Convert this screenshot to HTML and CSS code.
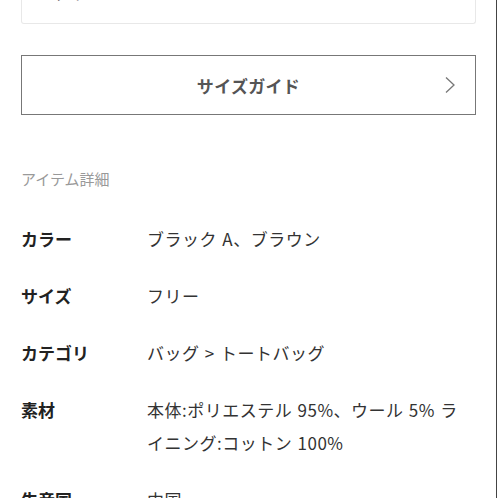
FILE: index.html
```html
<!DOCTYPE html>
<html lang="ja">
<head>
  <meta charset="UTF-8">
  <title>アイテム詳細</title>
  <link rel="stylesheet" href="styles.css">
</head>
<body>
<div class="page">
  <div class="size-table">
    <div class="size-row">
      <span>フリー</span>
      <span>33</span>
      <span>34</span>
      <span>33</span>
    </div>
  </div>

  <a class="guide-btn" href="#">
    <span class="guide-label">サイズガイド</span>
    <svg class="chevron" width="12" height="18" viewBox="0 0 12 18">
      <path d="M2 1.5 L10 9 L2 16.5" fill="none" stroke="#777" stroke-width="1.3"/>
    </svg>
  </a>

  <h2 class="detail-title">アイテム詳細</h2>

  <dl class="detail-list">
    <div class="detail-row">
      <dt>カラー</dt>
      <dd>ブラック A、ブラウン</dd>
    </div>
    <div class="detail-row">
      <dt>サイズ</dt>
      <dd>フリー</dd>
    </div>
    <div class="detail-row">
      <dt>カテゴリ</dt>
      <dd>バッグ &gt; トートバッグ</dd>
    </div>
    <div class="detail-row">
      <dt>素材</dt>
      <dd>本体:ポリエステル 95%、ウール 5% ライニング:コットン 100%</dd>
    </div>
    <div class="detail-row">
      <dt>生産国</dt>
      <dd>中国</dd>
    </div>
  </dl>
</div>
</body>
</html>
```

FILE: styles.css
```css
body {
  margin: 0;
  background: #fff;
  font-family: "Noto Sans CJK JP", "Noto Sans", sans-serif;
  color: #333;
}

.page {
  width: 497px;
  height: 498px;
  overflow: hidden;
  box-sizing: border-box;
  border-right: 1px solid #444;
  padding: 0 20px 0 21px;
}

/* size table, mostly scrolled off the top */
.size-table {
  margin-top: -19px;
  border: 1px solid #e8e8e8;
  border-top: 0;
  border-radius: 0 0 3px 3px;
  padding-bottom: 18px;
}
.size-row {
  display: grid;
  grid-template-columns: repeat(4, 1fr);
  text-align: center;
  font-size: 17px;
  line-height: 24px;
  color: #222;
}

.guide-btn {
  display: flex;
  align-items: center;
  justify-content: center;
  position: relative;
  height: 60px;
  margin-top: 31px;
  border: 1.5px solid #777;
  box-sizing: border-box;
  text-decoration: none;
}
.guide-label {
  font-size: 17px;
  font-weight: bold;
  color: #555;
  letter-spacing: 0.3px;
}
.chevron {
  position: absolute;
  right: 19px;
  top: 20px;
}

.detail-title {
  margin: 54px 0 0;
  font-size: 15px;
  line-height: 20px;
  font-weight: normal;
  color: #999;
}

.detail-list {
  margin: 33px 0 0;
  display: flex;
  flex-direction: column;
  gap: 24px;
}
.detail-row {
  display: flex;
  font-size: 17px;
  line-height: 33px;
}
.detail-row dt {
  width: 126px;
  flex-shrink: 0;
  font-weight: bold;
  color: #222;
}
.detail-row dd {
  margin: 0;
  flex: 1;
  padding-right: 10px;
  color: #333;
  letter-spacing: 0.5px;
  word-spacing: 1px;
}
```
